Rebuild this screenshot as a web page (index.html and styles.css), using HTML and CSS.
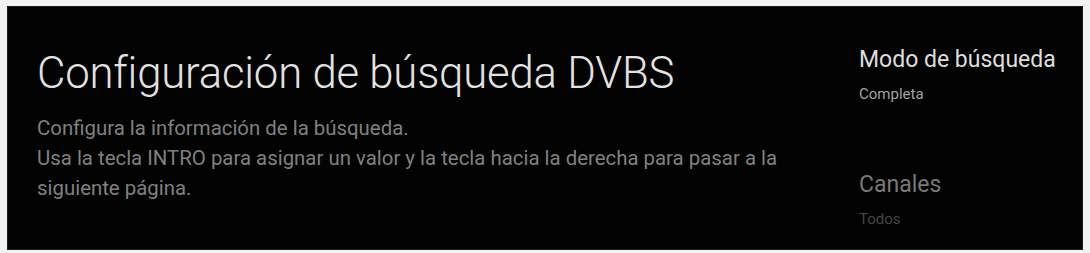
FILE: index.html
```html
<!DOCTYPE html>
<html lang="es">
<head>
<meta charset="utf-8">
<link rel="stylesheet" href="styles.css">
</head>
<body>
<div class="panel">
  <div class="main">
    <h1 class="title">Configuración de búsqueda DVBS</h1>
    <p class="desc">Configura la información de la búsqueda.<br>Usa la tecla INTRO para asignar un valor y la tecla hacia la derecha para pasar a la siguiente página.</p>
  </div>
  <div class="side">
    <div class="item">
      <div class="label active">Modo de búsqueda</div>
      <div class="value active">Completa</div>
    </div>
    <div class="item">
      <div class="label">Canales</div>
      <div class="value">Todos</div>
    </div>
  </div>
</div>
</body>
</html>
```

FILE: styles.css
```css
html, body {
  margin: 0;
  padding: 0;
  background: #f2f2f2;
  width: 1090px;
  height: 253px;
  overflow: hidden;
  font-family: Roboto, "Liberation Sans", sans-serif;
}
body {
  padding: 6px 7px 3px 7px;
  box-sizing: border-box;
}
.panel {
  background: #030303;
  height: 244px;
  display: flex;
  box-sizing: border-box;
  padding: 0 0 0 29px;
  border: 1px solid #1b1b1b;
}
.main {
  width: 792px;
  flex: none;
}
.title {
  margin: 36px 0 0 0;
  font-weight: 300;
  font-size: 43.7px;
  line-height: 60px;
  color: #e2e2e2;
  letter-spacing: -0.2px;
}
.desc {
  margin: 10px 0 0 0;
  font-size: 20.4px;
  line-height: 30px;
  color: #808080;
}
.side {
  margin-left: 30px;
  padding-top: 38px;
  display: flex;
  flex-direction: column;
  gap: 66px;
}
.label {
  font-size: 23px;
  line-height: 30px;
  color: #787878;
}
.label.active {
  color: #dedede;
}
.value {
  font-size: 15px;
  line-height: 20px;
  margin-top: 9px;
  color: #454545;
}
.value.active {
  color: #a2a2a2;
}
```
